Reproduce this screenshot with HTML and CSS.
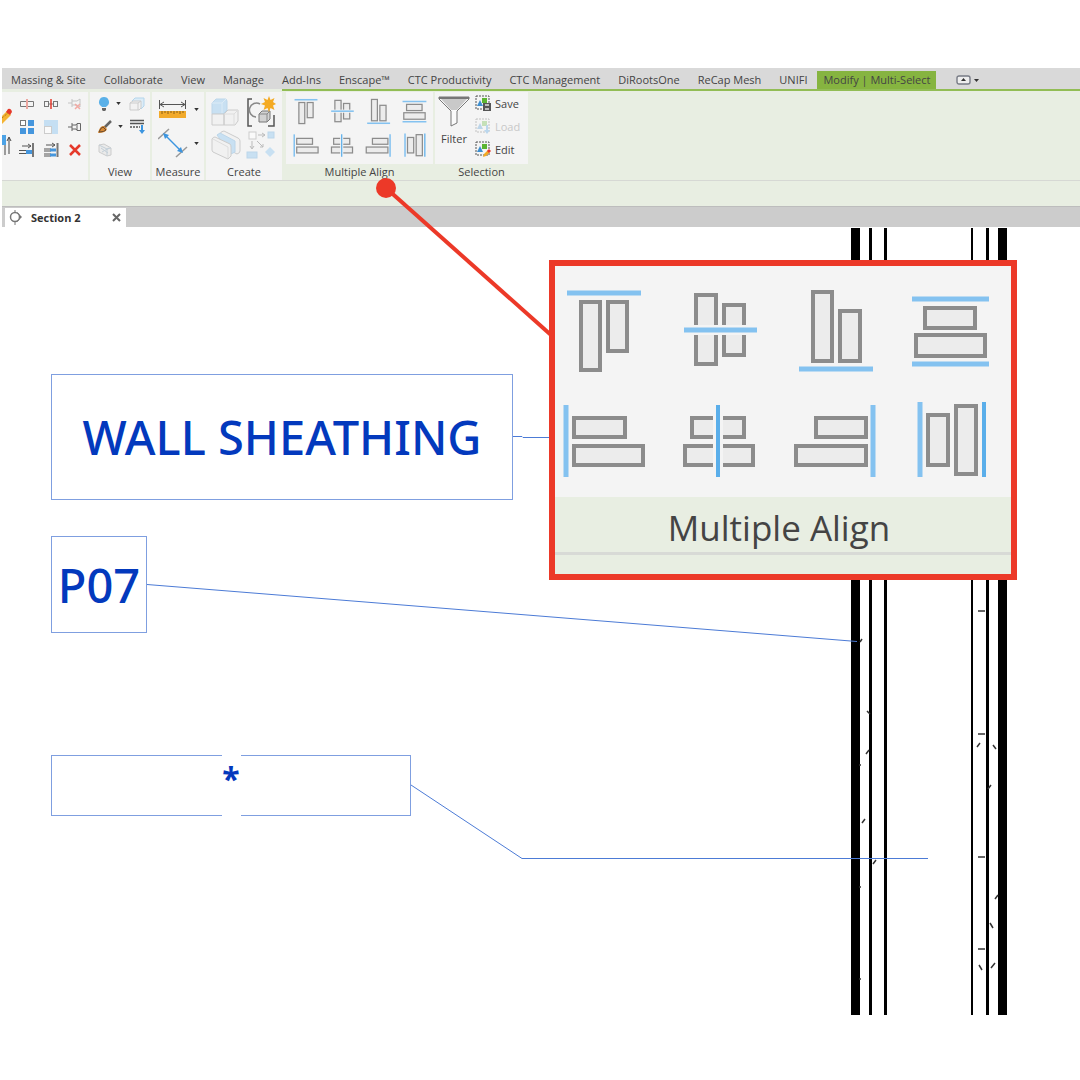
FILE: index.html
```html
<!DOCTYPE html>
<html lang="en">
<head>
    <meta charset="UTF-8">
    <meta name="viewport" content="width=device-width, initial-scale=1.0">
    <title>Multiple Align</title>
    <link rel="stylesheet" href="styles.css">
</head>
<body>
    <!-- align icons, shared by the ribbon and the enlarged callout -->
    <svg class="symbols" width="0" height="0" aria-hidden="true">
        <symbol id="align-top" viewBox="0 0 84 92">
            <path class="guide" d="M5 8H79"/>
            <rect class="shape" x="19" y="17" width="19" height="68"/>
            <rect class="shape" x="46" y="17" width="19" height="49"/>
        </symbol>
        <symbol id="align-middle" viewBox="0 0 84 92">
            <rect class="shape" x="19" y="10" width="20" height="69"/>
            <rect class="shape" x="47" y="20" width="20" height="50"/>
            <path class="halo" d="M14 45H72"/>
            <path class="guide" d="M7 45H80"/>
        </symbol>
        <symbol id="align-bottom" viewBox="0 0 84 92">
            <rect class="shape" x="21" y="7" width="19" height="69"/>
            <rect class="shape" x="48" y="26" width="20" height="50"/>
            <path class="guide" d="M7 84H81"/>
        </symbol>
        <symbol id="space-vertical" viewBox="0 0 84 92">
            <path class="guide" d="M5 14H82M5 79H82"/>
            <rect class="shape" x="18" y="23" width="50" height="20"/>
            <rect class="shape" x="9" y="50" width="69" height="21"/>
        </symbol>
        <symbol id="align-left" viewBox="0 0 84 92">
            <path class="guide" d="M4 10V82"/>
            <rect class="shape" x="12" y="23" width="51" height="19"/>
            <rect class="shape" x="12" y="51" width="69" height="19"/>
        </symbol>
        <symbol id="align-center" viewBox="0 0 84 92">
            <rect class="shape" x="15" y="23" width="52" height="19"/>
            <rect class="shape" x="8" y="51" width="68" height="19"/>
            <path class="halo" d="M41 18V75"/>
            <path class="guide strong" d="M41 10V82"/>
        </symbol>
        <symbol id="align-right" viewBox="0 0 84 92">
            <rect class="shape" x="24" y="23" width="50" height="19"/>
            <rect class="shape" x="4" y="51" width="70" height="19"/>
            <path class="guide" d="M81 10V82"/>
        </symbol>
        <symbol id="space-horizontal" viewBox="0 0 84 92">
            <path class="guide" d="M13 7V82"/>
            <path class="guide strong" d="M77 7V82"/>
            <rect class="shape" x="21" y="20" width="20" height="50"/>
            <rect class="shape" x="49" y="11" width="20" height="68"/>
        </symbol>
        <symbol id="caret" viewBox="0 0 6 4">
            <path d="M0 0H6L3 4Z" fill="#333"/>
        </symbol>
        <!-- dashed selection set box -->
        <symbol id="selection-set" viewBox="0 0 17 17">
            <rect x="1" y="1" width="13" height="13" fill="none" stroke="#555" stroke-dasharray="2 1"/>
            <path d="M2 11L5 5L8 11Z" fill="#3e8fd0"/>
            <rect x="7" y="3" width="5" height="5" fill="#5cb531"/>
        </symbol>
    </svg>

    <header class="ribbon">
        <nav class="tabs">
            <button>Massing &amp; Site</button>
            <button>Collaborate</button>
            <button>View</button>
            <button>Manage</button>
            <button>Add-Ins</button>
            <button>Enscape™</button>
            <button>CTC Productivity</button>
            <button>CTC Management</button>
            <button>DiRootsOne</button>
            <button>ReCap Mesh</button>
            <button>UNIFI</button>
            <button class="active">Modify | Multi-Select</button>
            <button class="minimize" aria-label="Minimize ribbon">
                <svg width="24" height="10" viewBox="0 0 24 10">
                    <rect x="1" y="1" width="13" height="8" rx="2" fill="#eee" stroke="#777b85" stroke-width="1.4"/>
                    <path d="M5 6L7.500 3L10 6Z" fill="#333"/>
                    <path d="M18 4H23L20.500 7Z" fill="#333"/>
                </svg>
            </button>
        </nav>

        <div class="panels">
            <section class="panel modify">
                <div class="clipped">
                    <svg width="10" height="16" viewBox="0 0 10 16">
                        <path d="M-1 9L5 3L9 7L0 16Z" fill="#f4b433"/>
                        <path d="M4 4L6 1Q9 0 10 4L8 7Z" fill="#e5392b"/>
                        <path d="M0 10L6 5" stroke="#9a6a14" stroke-dasharray="1 1"/>
                    </svg>
                    <svg width="10" height="22" viewBox="0 0 10 22">
                        <rect x="0" y="1" width="4" height="10" fill="#4da3e6"/>
                        <path d="M3 11V21M7 20V4M5 7L7 3L9 7" fill="none" stroke="#444"/>
                    </svg>
                </div>
                <div class="tool-grid">
                    <button aria-label="Split element">
                        <svg width="16" height="10" viewBox="0 0 16 10">
                            <path d="M7 2.500H1.500V7.500H7M9 2.500H14.500V7.500H9" fill="none" stroke="#777"/>
                            <path d="M8 0V10" stroke="#e5584b"/>
                        </svg>
                    </button>
                    <button aria-label="Split with gap">
                        <svg width="16" height="10" viewBox="0 0 16 10">
                            <rect x="1.500" y="2.500" width="4" height="5" fill="none" stroke="#777"/>
                            <rect x="10.500" y="2.500" width="4" height="5" fill="none" stroke="#777"/>
                            <path d="M6 5H10" stroke="#777"/>
                            <path d="M8 0V10" stroke="#e5392b" stroke-width="1.500"/>
                        </svg>
                    </button>
                    <button aria-label="Unpin" disabled>
                        <svg width="16" height="12" viewBox="0 0 16 12">
                            <path d="M1 5H5M5 1V9M5 3H10L13 1V9L10 7H5" fill="none" stroke="#c4c4c4"/>
                            <path d="M8 6L13 11M13 6L8 11" stroke="#f3aaa4" stroke-width="1.500"/>
                        </svg>
                    </button>
                    <button aria-label="Array">
                        <svg width="14" height="14" viewBox="0 0 14 14">
                            <rect x="0.500" y="0.500" width="5" height="5" fill="#fff" stroke="#777"/>
                            <rect x="8" width="6" height="6" fill="#4596dd"/>
                            <rect y="8" width="6" height="6" fill="#4596dd"/>
                            <rect x="8" y="8" width="6" height="6" fill="#4596dd"/>
                        </svg>
                    </button>
                    <button aria-label="Scale" disabled>
                        <svg width="14" height="14" viewBox="0 0 14 14">
                            <rect width="14" height="14" fill="#c5dff3"/>
                            <rect x="0.500" y="6.500" width="7" height="7" fill="#fafafa" stroke="#ccc"/>
                        </svg>
                    </button>
                    <button aria-label="Pin">
                        <svg width="14" height="10" viewBox="0 0 14 10">
                            <path d="M0 5H4M4 1V9M4 3H8L9 1.500H12.500V8.500H9L8 7H4M9 2V8" fill="none" stroke="#666"/>
                        </svg>
                    </button>
                    <button aria-label="Trim single">
                        <svg width="16" height="16" viewBox="0 0 16 16">
                            <path d="M3 4H12M9 2L12 4L9 6M0 8.500H7M0 11.500H7" fill="none" stroke="#555"/>
                            <rect x="7" y="8" width="6" height="4" fill="#4596dd"/>
                            <path d="M14 1V15" stroke="#777" stroke-width="2"/>
                        </svg>
                    </button>
                    <button aria-label="Trim multiple">
                        <svg width="16" height="16" viewBox="0 0 16 16">
                            <path d="M3 3H12M9 1L12 3L9 5M1 7H8M1 9H8M1 12H8M1 14H8" fill="none" stroke="#555"/>
                            <path d="M7 8H13M7 13H13" stroke="#4596dd" stroke-width="3"/>
                            <path d="M14.500 1V15" stroke="#777" stroke-width="2"/>
                        </svg>
                    </button>
                    <button aria-label="Delete">
                        <svg width="12" height="12" viewBox="0 0 12 12">
                            <path d="M1 1L11 11M11 1L1 11" stroke="#e5392b" stroke-width="2.500"/>
                        </svg>
                    </button>
                </div>
            </section>

            <section class="panel view">
                <div class="view-grid">
                    <button aria-label="Hide in view">
                        <svg width="12" height="14" viewBox="0 0 12 14">
                            <path d="M6 0A5 5 0 0 1 9 9L8 10H4L3 9A5 5 0 0 1 6 0Z" fill="#5ab0e8"/>
                            <path d="M4 11H8V13L7 14H5L4 13Z" fill="#666"/>
                        </svg>
                        <svg width="5" height="3"><use href="#caret"/></svg>
                    </button>
                    <button aria-label="Displace" disabled>
                        <svg width="16" height="14" viewBox="0 0 16 14">
                            <path d="M3 4L6 1H15V9L12 12" fill="#dcecf7" stroke="#b4d5ec"/>
                            <path d="M1 6L4 4H12V11L10 13H1Z" fill="#f2f2f2" stroke="#ccc"/>
                            <path d="M1 6H9V13M9 6L12 4" fill="none" stroke="#ccc"/>
                        </svg>
                    </button>
                    <button aria-label="Override graphics">
                        <svg width="14" height="14" viewBox="0 0 14 14">
                            <path d="M6 8L13 1" stroke="#666" stroke-width="2.500"/>
                            <path d="M0 13Q2 5 6 6L9 9Q8 13 0 13Z" fill="#d98a35"/>
                            <path d="M1 12Q3 7 5 7L8 10Q6 12 1 12Z" fill="none" stroke="#6b4a2b"/>
                        </svg>
                        <svg width="5" height="3"><use href="#caret"/></svg>
                    </button>
                    <button aria-label="Linework">
                        <svg width="16" height="16" viewBox="0 0 16 16">
                            <path d="M1 1.500H15M1 4.500H15" stroke="#555" stroke-width="1.500"/>
                            <path d="M1 8H11" stroke="#555" stroke-width="1.500" stroke-dasharray="2 1"/>
                            <path d="M12 6H14V11H16L13 15L10 11H12Z" fill="#3c95e0"/>
                        </svg>
                    </button>
                    <button aria-label="Create section box" disabled>
                        <svg width="14" height="14" viewBox="0 0 14 14">
                            <path d="M1 2L6 1L13 5V12L9 13L1 9Z" fill="#eaeaea" stroke="#ccc"/>
                            <path d="M1 2L9 6L13 5M9 6V13M3 5L10 10M4 9L11 5" fill="none" stroke="#c3cfd8"/>
                        </svg>
                    </button>
                </div>
                <h2>View</h2>
            </section>

            <section class="panel measure">
                <div class="measure-tools">
                    <button aria-label="Measure">
                        <svg width="30" height="18" viewBox="0 0 30 18">
                            <path d="M1.500 0V9M27.500 0V9M2 4.500H27M6 2L2 4.500L6 7M23 2L27 4.500L23 7" fill="none" stroke="#555"/>
                            <rect x="1" y="11" width="27" height="7" fill="#f2aa2b"/>
                            <path d="M4 11V14M7 11V13M10 11V14M13 11V13M16 11V14M19 11V13M22 11V14M25 11V13" stroke="#8a6016"/>
                        </svg>
                        <svg width="5" height="3"><use href="#caret"/></svg>
                    </button>
                    <button aria-label="Aligned dimension">
                        <svg width="30" height="32" viewBox="0 0 30 32">
                            <path d="M0 12L11 2M18 30L29 20" stroke="#999" stroke-width="1.500"/>
                            <path d="M7 8L23 24" stroke="#3c95e0" stroke-width="1.500"/>
                            <path d="M5 6L11 8L7 12ZM25 26L19 24L23 20Z" fill="#3c95e0"/>
                        </svg>
                        <svg width="5" height="3"><use href="#caret"/></svg>
                    </button>
                </div>
                <h2>Measure</h2>
            </section>

            <section class="panel create">
                <div class="create-grid">
                    <button aria-label="Create parts" disabled>
                        <svg width="30" height="30" viewBox="0 0 30 30">
                            <path d="M1 6L5 2H15L16 4V13L12 17H1Z" fill="#c8e0f2" stroke="#bcd6ea"/>
                            <path d="M1 17H13V28H1ZM13 17L17 13H27V24L24 28H13Z" fill="#f1f1f1" stroke="#ccc"/>
                            <path d="M1 6H11V16M11 6L15 2" fill="none" stroke="#dcebf6"/>
                            <path d="M13 17H23V28M23 17L27 13" fill="none" stroke="#ddd"/>
                        </svg>
                    </button>
                    <button aria-label="Create group">
                        <svg width="30" height="32" viewBox="0 0 30 32">
                            <path d="M6 3H2V30H6M22 30H28V19" fill="none" stroke="#555" stroke-width="1.500"/>
                            <path d="M14 8A7 7 0 1 0 10 21" fill="none" stroke="#888" stroke-width="1.500"/>
                            <path d="M13 18L16 15H24V23L21 26H13Z" fill="#d2d2d2" stroke="#777"/>
                            <path d="M13 18H21V26M21 18L24 15" fill="none" stroke="#888"/>
                            <path d="M23 0L24.500 4L28.500 2L27 6L30 8L27 9.500L28.500 14L24.500 12L23 16L21.500 12L17.500 14L19 9.500L15 8L19 6L17.500 2L21.500 4Z" fill="#f4aa22"/>
                        </svg>
                    </button>
                    <button aria-label="Create assembly" disabled>
                        <svg width="30" height="30" viewBox="0 0 30 30">
                            <path d="M9 4Q10 1 13 1L27 8Q29 9 29 11V21Q29 23 26 24L9 15Z" fill="#f1f1f1" stroke="#ccc"/>
                            <path d="M6 5L9 3L24 11V22L20 24Z" fill="#c8e0f2" stroke="#bcd6ea"/>
                            <path d="M1 9Q2 7 4 7L19 14Q20 15 20 17V26L17 29L2 22Q1 21 1 20Z" fill="#f1f1f1" stroke="#ccc"/>
                            <path d="M2 9L17 17V28" fill="none" stroke="#ddd"/>
                        </svg>
                    </button>
                    <button aria-label="Create similar" disabled>
                        <svg width="30" height="30" viewBox="0 0 30 30">
                            <rect x="3" y="2" width="7" height="7" fill="#fafafa" stroke="#ccc"/>
                            <rect x="22" y="2" width="6" height="6" fill="#c8e0f2" stroke="#bcd6ea"/>
                            <rect x="1" y="22" width="10" height="6" fill="#c8e0f2" stroke="#bcd6ea"/>
                            <path d="M24 17L29 22L24 27L19 22Z" fill="#c8e0f2"/>
                            <path d="M12 5H19M16 3L19 5L16 7M6 11V18M4 16L6 19L8 16M11 11L17 17M17 14V17H14" fill="none" stroke="#bbb"/>
                        </svg>
                    </button>
                </div>
                <h2>Create</h2>
            </section>

            <section class="panel contextual align">
                <div class="align-grid">
                    <button aria-label="Align top"><svg><use href="#align-top"/></svg></button>
                    <button aria-label="Align middle"><svg><use href="#align-middle"/></svg></button>
                    <button aria-label="Align bottom"><svg><use href="#align-bottom"/></svg></button>
                    <button aria-label="Space vertically"><svg><use href="#space-vertical"/></svg></button>
                    <button aria-label="Align left"><svg><use href="#align-left"/></svg></button>
                    <button aria-label="Align center"><svg><use href="#align-center"/></svg></button>
                    <button aria-label="Align right"><svg><use href="#align-right"/></svg></button>
                    <button aria-label="Space horizontally"><svg><use href="#space-horizontal"/></svg></button>
                </div>
                <h2>Multiple Align</h2>
            </section>

            <section class="panel contextual selection">
                <div class="selection-tools">
                    <button class="filter">
                        <svg width="32" height="32" viewBox="0 0 32 32">
                            <path d="M1 1H31V3L19 15V27L13 30V15L1 3Z" fill="#fafafa" stroke="#777"/>
                            <path d="M3 3H29L19 14H13Z" fill="#c9c9c9"/>
                            <path d="M1 2H31" stroke="#777" stroke-width="2"/>
                        </svg>
                        Filter
                    </button>
                    <div class="sets">
                        <button>
                            <svg width="17" height="17" viewBox="0 0 17 17">
                                <use href="#selection-set"/>
                                <rect x="8" y="8" width="8" height="8" fill="#555"/>
                                <path d="M10 10H14M10 14H14" stroke="#ddd" stroke-width="1.500"/>
                            </svg>
                            Save
                        </button>
                        <button disabled>
                            <svg class="faded" width="17" height="17" viewBox="0 0 17 17">
                                <use href="#selection-set"/>
                                <path d="M11 7H13V12H15L12 16L9 12H11Z" fill="#3c95e0"/>
                            </svg>
                            Load
                        </button>
                        <button>
                            <svg width="17" height="17" viewBox="0 0 17 17">
                                <use href="#selection-set"/>
                                <path d="M8 16L9 13L13 9L15 11L11 15Z" fill="#f4aa22"/>
                                <path d="M12 10L14 8L16 10L14 12Z" fill="#e5392b"/>
                            </svg>
                            Edit
                        </button>
                    </div>
                </div>
                <h2>Selection</h2>
            </section>
        </div>

        <div class="options-bar"></div>

        <div class="doc-tabs">
            <div class="doc-tab">
                <svg width="14" height="15" viewBox="0 0 14 15">
                    <path d="M8 2L13 7L8 12Z" fill="#777"/>
                    <circle cx="6" cy="7" r="4.500" fill="#fff" stroke="#777" stroke-width="1.500"/>
                    <path d="M6 0V3M6 11V15" stroke="#777"/>
                </svg>
                <span>Section 2</span>
                <button aria-label="Close view">
                    <svg width="9" height="9" viewBox="0 0 9 9">
                        <path d="M1 1L8 8M8 1L1 8" stroke="#666" stroke-width="2"/>
                    </svg>
                </button>
            </div>
        </div>
    </header>

    <main class="canvas">
        <svg class="drawing" aria-hidden="true">
            <!-- wall layers -->
            <g class="wall">
                <rect x="851" y="1" width="9" height="787"/>
                <rect x="869" y="1" width="3" height="787"/>
                <rect x="884" y="1" width="3" height="787"/>
                <rect x="971" y="1" width="2" height="787"/>
                <rect x="986" y="1" width="3" height="787"/>
                <rect x="998" y="1" width="9" height="787"/>
            </g>
            <path class="hatch" d="M978 384H985M978 507H985M977 520L980 516M993 518L996 522M988 562L991 558M860 415L862 412M867 484L870 487M866 527L869 523M859 538H861M862 596L865 592M873 637L876 633M859 660H861M859 752H861M978 630H985M995 672L998 668M990 696L993 701M978 722H985M979 738L982 743M991 741L995 736"/>
            <!-- leaders -->
            <path class="leader" d="M512 209.500H522L523 210.500H550"/>
            <path class="leader" d="M147 357.500L857 414.500"/>
            <path class="leader" d="M411 558L522 631.500H928"/>
        </svg>

        <div class="note sheathing">WALL SHEATHING</div>
        <div class="note keynote">P07</div>
        <div class="note empty"><span>*</span></div>

        <svg class="drawing" aria-hidden="true">
            <path class="pointer" d="M386 -39L551 108"/>
            <circle class="pointer-dot" cx="386" cy="-39" r="10"/>
        </svg>

        <aside class="callout">
            <div class="callout-grid">
                <svg><use href="#align-top"/></svg>
                <svg><use href="#align-middle"/></svg>
                <svg><use href="#align-bottom"/></svg>
                <svg><use href="#space-vertical"/></svg>
                <svg><use href="#align-left"/></svg>
                <svg><use href="#align-center"/></svg>
                <svg><use href="#align-right"/></svg>
                <svg><use href="#space-horizontal"/></svg>
            </div>
            <h2>Multiple Align</h2>
        </aside>
    </main>
</body>
</html>
```
FILE: styles.css
```css
* {
    box-sizing: border-box;
}
body {
    margin: 0;
    padding-top: 68px;
    min-height: 100vh;
    display: flex;
    flex-direction: column;
    overflow-x: hidden;
    background: #fff;
    font: 11px/16px "Open Sans", "Noto Sans", sans-serif;
    color: #444;
}
button {
    margin: 0;
    padding: 0;
    border: none;
    background: none;
    font: inherit;
    color: inherit;
    cursor: pointer;
}
button:disabled {
    color: #c8c8c8;
    cursor: default;
}
svg {
    display: block;
    flex-shrink: 0;
}
h2 {
    margin: 0;
    font-size: 11px;
    line-height: 16px;
    font-weight: 400;
    text-align: center;
}
.symbols {
    position: absolute;
}

/* align icon parts */
.shape {
    fill: #ececec;
    stroke: #8c8c8c;
    stroke-width: 4;
}
.guide {
    fill: none;
    stroke: #84c2f0;
    stroke-width: 5;
}
.guide.strong {
    stroke: #5aaeea;
    stroke-width: 4;
}
.halo {
    stroke: #f4f4f4;
    stroke-width: 10;
}

/* ribbon */
.ribbon {
    margin-left: 2px;
}
.tabs {
    display: flex;
    align-items: flex-end;
    gap: 18px;
    height: 21px;
    padding-left: 9px;
    background: #d9d9d9;
    white-space: nowrap;
}
.tabs button {
    height: 18px;
}
.tabs .active {
    margin-left: -8px;
    padding: 0 6px;
    background: #86b440;
}
.tabs .minimize {
    margin-left: 2px;
    display: flex;
    align-items: center;
}
.panels {
    display: flex;
    gap: 2px;
    height: 92px;
    padding-top: 1px;
    border-top: 2px solid #92bd55;
    border-image: linear-gradient(to right, #e8eee2 280px, #92bd55 280px) 2 0 0 0;
    box-shadow: inset 0 -1px #d6d8d4;
    background: #e8eee2;
}
.panel {
    display: flex;
    flex-direction: column;
    justify-content: space-between;
    margin-bottom: 1px;
    background: #f4f4f4;
}
.panel button {
    display: flex;
    align-items: center;
    justify-content: center;
}
.modify {
    flex-direction: row;
    justify-content: flex-start;
    width: 86px;
}
.clipped {
    width: 13px;
    padding-top: 16px;
    display: flex;
    flex-direction: column;
    gap: 10px;
}
.tool-grid {
    display: grid;
    grid-template-columns: repeat(3, 24px);
    grid-auto-rows: 23px;
    align-content: start;
}
.view {
    width: 60px;
}
.view-grid {
    display: grid;
    grid-template-columns: 24px 20px;
    grid-auto-rows: 23px;
    column-gap: 7px;
    padding-left: 8px;
}
.view-grid button {
    justify-content: flex-start;
    gap: 6px;
}
.measure {
    width: 52px;
}
.measure-tools {
    padding: 8px 0 0 6px;
    display: grid;
    gap: 9px;
}
.measure-tools button {
    justify-content: flex-start;
    gap: 6px;
}
.create {
    width: 76px;
}
.create-grid {
    display: grid;
    grid-template-columns: 30px 30px;
    gap: 2px 5px;
    padding: 4px 0 0 5px;
}
.contextual h2 {
    background: #e8eee2;
}
.align {
    margin-left: 2px;
    width: 147px;
}
.align-grid {
    display: grid;
    grid-template-columns: repeat(4, 26px);
    gap: 5px 10px;
    padding: 5px 0 0 7px;
}
.align-grid svg {
    width: 26px;
    height: 29px;
}
.selection {
    width: 93px;
}
.selection-tools {
    display: flex;
    gap: 5px;
    padding-left: 3px;
}
.selection .filter {
    flex-direction: column;
    justify-content: flex-start;
    gap: 3px;
    width: 32px;
    padding-top: 4px;
}
.sets {
    display: grid;
    grid-auto-rows: 23px;
}
.sets button {
    justify-content: flex-start;
    gap: 3px;
}
.faded {
    opacity: 0.3;
}
.options-bar {
    height: 25px;
    background: #e8eee2;
}
.doc-tabs {
    height: 21px;
    padding: 1px 0 0 3px;
    border-top: 1px solid #bdbdbd;
    background: #ccc;
}
.doc-tab {
    display: flex;
    align-items: center;
    width: 121px;
    height: 19px;
    padding: 0 5px 0 4px;
    background: #fff;
    color: #333;
    font-weight: 700;
}
.doc-tab span {
    flex: 1;
    padding-left: 8px;
}

/* drawing area */
.canvas {
    position: relative;
    flex: 1;
}
.drawing {
    position: absolute;
    inset: 0;
    width: 100%;
    height: 100%;
    overflow: visible;
    pointer-events: none;
}
.wall {
    fill: #000;
}
.hatch {
    fill: none;
    stroke: #333;
    stroke-width: 1.5;
}
.leader {
    fill: none;
    stroke: #4c7bd6;
}
.note {
    position: absolute;
    left: 51px;
    display: flex;
    align-items: center;
    justify-content: center;
    border: 1px solid #7f9fe0;
    font: 500 47px/60px "Noto Sans", sans-serif;
    color: #0339bd;
    white-space: nowrap;
}
.sheathing {
    top: 147px;
    width: 462px;
    height: 126px;
}
.keynote {
    top: 309px;
    width: 96px;
    height: 97px;
}
.empty {
    top: 528px;
    width: 360px;
    height: 61px;
}
.empty span {
    width: 19px;
    margin: -1px 0;
    padding-bottom: 14px;
    background: #fff;
    font-size: 32px;
    font-weight: 700;
    line-height: 47px;
    text-align: center;
}
.pointer {
    stroke: #ec3928;
    stroke-width: 4;
}
.pointer-dot {
    fill: #ec3928;
}
.callout {
    position: absolute;
    left: 549px;
    top: 33px;
    width: 468px;
    border: 6px solid #ec3928;
    padding-bottom: 19px;
    background: #e8eee2;
}
.callout-grid {
    display: grid;
    grid-template-columns: repeat(4, 84px);
    gap: 18px 31px;
    padding: 19px 0 10px 7px;
    background: #f4f4f4;
}
.callout-grid svg {
    width: 84px;
    height: 92px;
}
.callout h2 {
    padding: 7px 8px 0 0;
    border-bottom: 3px solid #d8dad6;
    font-size: 35px;
    line-height: 48px;
}
```
